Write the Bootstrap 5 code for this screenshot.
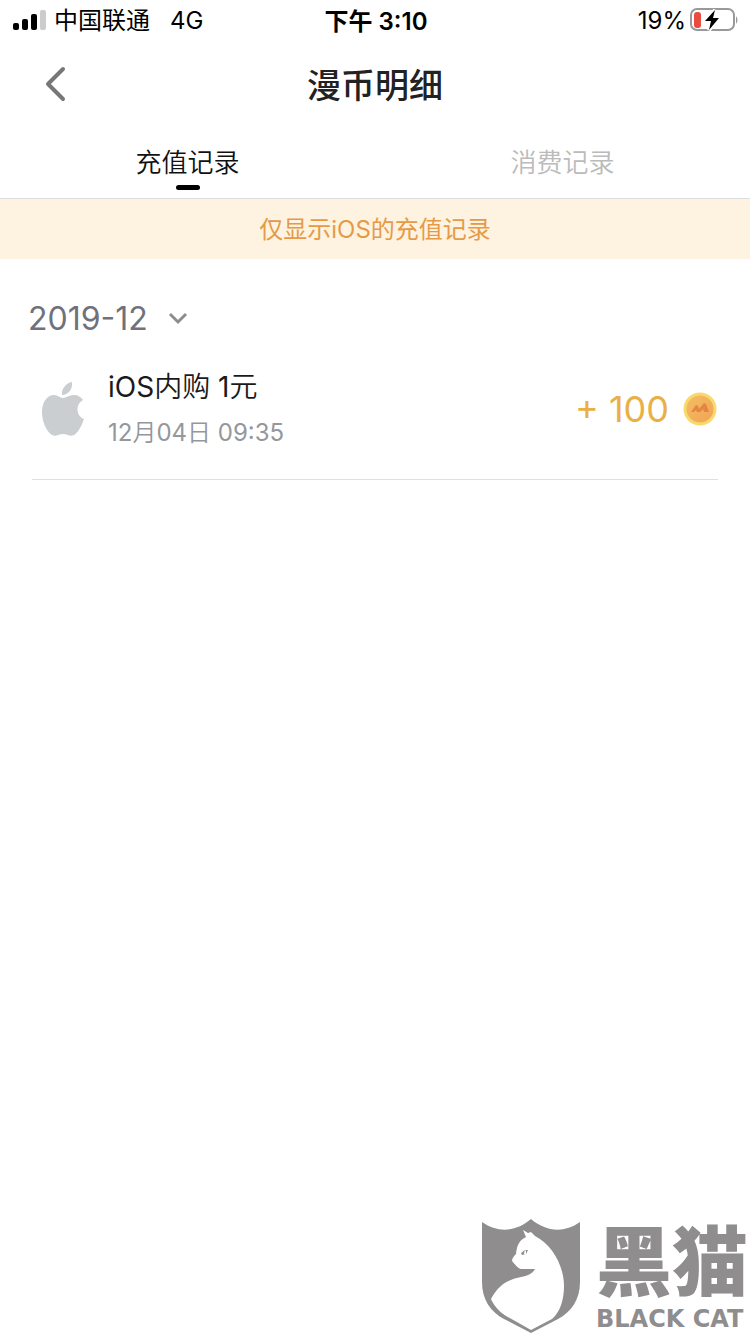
<!DOCTYPE html>
<html lang="zh-CN">
<head>
<meta charset="utf-8">
<meta name="viewport" content="width=device-width, initial-scale=1">
<title>漫币明细</title>
<link href="https://cdn.jsdelivr.net/npm/bootstrap@5.3.0/dist/css/bootstrap.min.css" rel="stylesheet">
<style>
  body { font-family: Inter, "Noto Sans CJK SC", sans-serif; color: #222; background: #fff; }
  svg { display: block; flex: none; }
  .status-bar { height: 40px; font-size: 24px; line-height: 40px; color: #000; padding: 2px 11px 0 13px; }
  .status-bar svg { margin-top: -2px; }
  .status-side { flex: 1 1 0; }
  .network-type { margin-left: 20px; }
  .status-time { font-weight: 600; }
  .page-head { height: 88px; padding: 0 44px; }
  .page-title { font-size: 34px; line-height: 48px; font-weight: 500; padding-top: 4px; }
  .back-btn { width: 24px; height: 48px; }
  .record-tabs { border-bottom: 1px solid #dcdee0; }
  .record-tabs .nav-link { width: 100%; padding: 14px 0 8px; border: 0; background: none; color: #bbb; font-size: 26px; line-height: 42px; font-weight: 350; }
  .record-tabs .nav-link.active { color: #111; }
  .record-tabs .nav-link::after { content: ""; display: block; width: 24px; height: 5px; margin: 1px auto 0; border-radius: 3px; }
  .record-tabs .nav-link.active::after { background: #000; }
  .notice { background: #fdf3e0; color: #e69a48; font-size: 24px; line-height: 58px; padding-top: 2px; }
  .month-btn { margin: 36px 0 0 28px; gap: 20px; font-size: 32px; line-height: 48px; color: #6f727c; }
  .record-item { margin: 0 32px; padding: 20px 0 24px 10px; border-bottom: 1px solid #dfdfe1; }
  .record-text { margin-left: 23px; }
  .record-name { font-size: 28px; line-height: 48px; color: #1a1a1a; }
  .record-time { font-size: 24px; line-height: 44px; color: #94979b; }
  .light-text { font-weight: 350; }
  .amount { font-size: 36px; line-height: 48px; color: #e9b045; gap: 14px; }
  .brand { color: #8f8d8e; gap: 16px; padding-right: 2px; }
  .brand-zh { font-family: "Liberation Sans", "Noto Sans CJK SC", sans-serif; font-size: 76px; line-height: 80px; font-weight: 900; }
  .brand-en { font-family: "DejaVu Sans", sans-serif; font-size: 24px; line-height: 30px; font-weight: 700; }
</style>
</head>
<body>
<div class="d-flex flex-column min-vh-100">
  <div class="status-bar d-flex">
    <div class="status-side d-flex align-items-center">
      <svg width="33" height="22" viewBox="0 0 33 22"><rect y="14" width="6" height="7" rx="2"/><rect x="9" y="10" width="6" height="11" rx="2"/><rect x="18" y="5" width="6" height="16" rx="2"/><rect x="27" y="1" width="6" height="20" rx="2" fill="#ccc"/></svg>
      <span class="ms-2">中国联通</span><span class="network-type">4G</span>
    </div>
    <div class="status-time">下午 3:10</div>
    <div class="status-side d-flex align-items-center justify-content-end gap-1">
      <span>19%</span>
      <svg width="49" height="24" viewBox="0 0 49 24"><rect x="1" y="1" width="43" height="21" rx="6" fill="none" stroke="#999" stroke-width="2"/><path d="M46 8q3 4 0 8z" fill="#999"/><rect x="4" y="4" width="7" height="16" rx="3" fill="#e94b3c"/><path d="M25 2 15 13h6l-2 9 10-12h-6z" stroke="#fff" stroke-width="4" fill="#fff"/><path d="M25 2 15 13h6l-2 9 10-12h-6z"/></svg>
    </div>
  </div>

  <header class="page-head d-flex align-items-center justify-content-between">
    <button type="button" class="back-btn btn p-0 border-0" aria-label="返回">
      <svg width="24" height="36" viewBox="0 0 24 36"><path d="M19 3 4 18l15 15" fill="none" stroke="#777" stroke-width="4" stroke-linecap="round" stroke-linejoin="round"/></svg>
    </button>
    <h1 class="page-title mb-0">漫币明细</h1>
    <span class="back-btn"></span>
  </header>

  <ul class="record-tabs nav nav-justified" role="tablist">
    <li class="nav-item" role="presentation"><button type="button" class="nav-link active" role="tab" aria-selected="true">充值记录</button></li>
    <li class="nav-item" role="presentation"><button type="button" class="nav-link" role="tab" aria-selected="false">消费记录</button></li>
  </ul>

  <div class="notice text-center">仅显示iOS的充值记录</div>

  <main>
    <button type="button" class="month-btn btn p-0 border-0 d-flex align-items-center">
      <span>2019-12</span>
      <svg width="20" height="14" viewBox="0 0 20 14"><path d="m2 2 8 8 8-8" fill="none" stroke="#8a8d92" stroke-width="3"/></svg>
    </button>
    <ul class="list-unstyled m-0">
      <li class="record-item d-flex align-items-center">
        <svg width="43" height="54" viewBox="0 0 43 54" fill="#caced1"><path d="M30 0c1 7-4 13-10 13-1-6 4-12 10-13z"/><path d="M21 16c3 0 6-3 11-3 4 0 7 2 9 5-8 4-7 16 1 19-2 6-6 14-10 16-4 2-7-1-11-1s-7 3-11 1C4 49 0 39 0 30c0-11 6-17 12-17 4 0 6 3 9 3z"/></svg>
        <div class="record-text flex-grow-1">
          <div class="record-name">iOS<span class="light-text">内购</span> 1<span class="light-text">元</span></div>
          <div class="record-time">12<span class="light-text">月</span>04<span class="light-text">日</span> 09:35</div>
        </div>
        <div class="amount d-flex align-items-center">
          <span>+ 100</span>
          <svg width="35" height="34" viewBox="0 0 35 34"><defs><linearGradient id="coin" x1="0" y1="0" x2="1" y2="1"><stop stop-color="#f4bd62"/><stop offset="1" stop-color="#f0a455"/></linearGradient></defs><circle cx="17" cy="17" r="16.5" fill="#f8da6c"/><circle cx="17" cy="17" r="13.5" fill="url(#coin)"/><path d="m8 20 5-7 2 1 1 3 5-6 2 1 3 8h-5l-1-3-3 3h-3l-1-2-2 2z" fill="#e48542"/></svg>
        </div>
      </li>
    </ul>
  </main>

  <footer class="brand d-flex align-items-end justify-content-end mt-auto">
    <svg width="98" height="116" viewBox="0 0 98 116"><path d="M0 4c17 12 35 9 49-3 14 12 32 15 49 3v60c0 18-9 30-22 37l-27 14-27-14C9 94 0 82 0 64z" fill="#8f8d8e"/><path d="m41 12 5 3 3-1 4 4c18 9 29 31 29 50 0 14-4 26-12 33l-21 11-25-14C16 93 11 86 9 81c9-17 21-20 30-22 7-1 12-4 14-8H39c-4-1-6-5-9-8 0-3 2-5 4-7 1-10 4-14 10-17z" fill="#fff"/><path d="m39 35 4-3-1 3q0 2 2 1l-4 1zm4-3 3 0-2 4 0-3z" fill="#8f8d8e"/></svg>
    <div>
      <div class="brand-zh">黑猫</div>
      <div class="brand-en">BLACK CAT</div>
    </div>
  </footer>
</div>
<script src="https://cdn.jsdelivr.net/npm/bootstrap@5.3.0/dist/js/bootstrap.bundle.min.js"></script>
</body>
</html>
